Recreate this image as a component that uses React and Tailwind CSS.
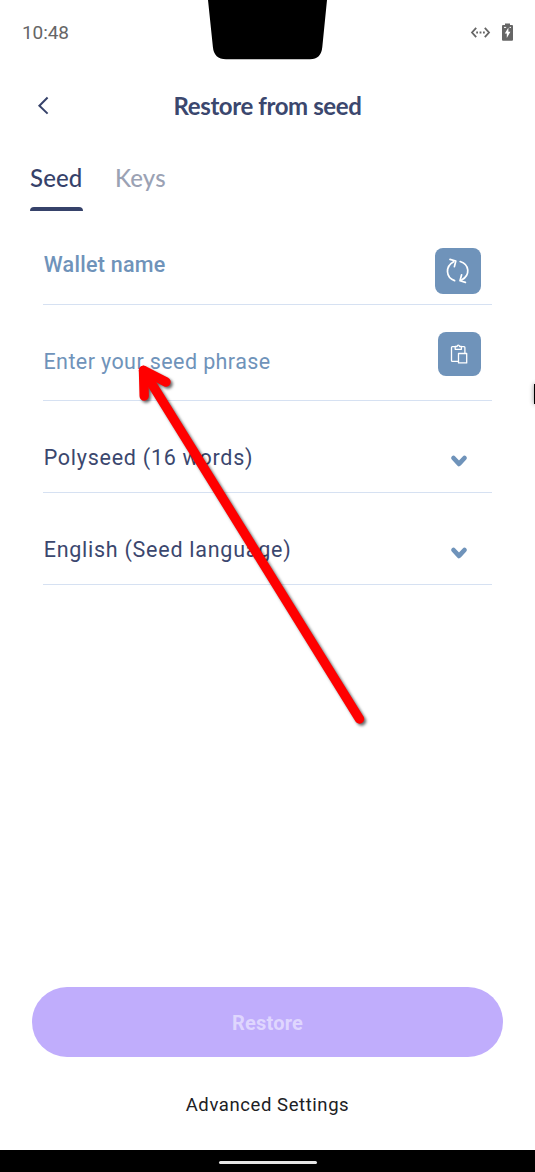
import React from "react";

function RefreshIcon() {
  return (
    <svg width="24" height="28" viewBox="0 0 24 28" fill="none" stroke="#fff" strokeWidth="1.7" strokeLinecap="round" strokeLinejoin="round">
      <path d="M8.6 23.6C-.4 20.5-1 9.5 7.6 4.7" />
      <path d="M4 2.4L9.8 4L8.4 9.6" />
      <path d="M14.2 4.5C23.5 7.5 24.6 18 15.6 23" />
      <path d="M15.6 17.8L14 23.8L19.4 25.4" />
    </svg>
  );
}

function PasteIcon() {
  return (
    <svg width="18" height="20" viewBox="0 0 18 20" fill="none" stroke="#fff" strokeWidth="1.3" strokeLinejoin="round">
      <path d="M5 2.6H2.4Q1.5 2.6 1.5 3.5V16.4Q1.5 17.3 2.4 17.3H8.3M11.5 2.6H14Q14.9 2.6 14.9 3.5V9.3" />
      <path d="M5.2 2.5H7.1Q7.2 1.1 8.3 1.1T9.5 2.5H11.4V5.3H5.2Z" />
      <path d="M8.5 9.5H16.7V18.9H8.5Z" />
    </svg>
  );
}

function Chevron() {
  return (
    <svg className="mr-[24px] mt-[29px]" width="18" height="14" viewBox="0 0 18 14" fill="none" stroke="#6f93ba" strokeWidth="4.7" strokeLinecap="round" strokeLinejoin="round">
      <path d="M3.5 4L9 9.9L14.5 4" />
    </svg>
  );
}

function StatusBar() {
  return (
    <div className="flex h-[66px] items-start justify-between">
      <div className="w-[208px] pl-[22px] pt-[20px] text-[19px] leading-[26px] tracking-[-0.1px] text-[#666]">10:48</div>
      <svg width="119" height="60" viewBox="0 0 119 60">
        <path d="M0 0H119L114.3 47Q113.2 59.3 102 59.3H18Q6 59.3 4.9 47Z" fill="#000" />
      </svg>
      <div className="flex w-[208px] items-center justify-end gap-[11px] pr-[21px] pt-[23px]">
        <svg width="21" height="14" viewBox="0 0 21 14" fill="none" stroke="#666" strokeWidth="1.8">
          <path d="M6.2 2.8L2 7.5L6.2 12.2M14.8 2.8L19 7.5L14.8 12.2" />
          <path d="M6.2 7.5H8M9.6 7.5H11.4M13 7.5H14.8" />
        </svg>
        <svg width="12" height="18" viewBox="0 0 12 18">
          <path d="M3 0.6H8V2H10Q11 2 11 3V16.7Q11 17.7 10 17.7H1Q0 17.7 0 16.7V3Q0 2 1 2H3Z" fill="#666" />
          <path d="M6.4 4.6V8.7H8.4L4.8 15V10.5H2.8Z" fill="#fff" />
          <path d="M2 4.4H4.2M7.6 4.4H9" stroke="#fff" strokeWidth="1" />
        </svg>
      </div>
    </div>
  );
}

function Field({ className, children }) {
  return <div className={`mx-[43px] flex items-center justify-between border-b border-[#d6e1f2] ${className}`}>{children}</div>;
}

export default function App() {
  return (
    <div className="relative flex h-[1172px] w-[535px] flex-col overflow-hidden bg-white font-['Roboto',sans-serif]">
      <StatusBar />
      <header className="grid h-[80px] grid-cols-[86px_1fr_86px] items-center text-[#36426a]">
        <svg className="ml-[36px]" width="14" height="20" viewBox="0 0 14 20" fill="none" stroke="currentColor" strokeWidth="2">
          <path d="M11.6 1.5L3.4 9.7L11.6 17.6" />
        </svg>
        <h1 className="text-center font-['Lato',sans-serif] text-[24px] font-bold tracking-[-0.4px] text-[#3b476e]">Restore from seed</h1>
      </header>
      <nav className="flex h-[65px] gap-[32px] pl-[30px] font-['Lato',sans-serif] text-[24px] leading-[30px] tracking-[0.15px]">
        <div className="flex w-[53px] flex-col justify-between pt-[17px] text-[#36426a]">
          <span className="font-medium">Seed</span>
          <div className="h-[4.5px] rounded-t-[4px] bg-[#36426a]" />
        </div>
        <div className="pt-[17px] font-medium text-[#9ba2b4]">Keys</div>
      </nav>
      <main className="flex-1 text-[21.5px] text-[#3b476e]">
        <Field className="h-[94px]">
          <span className="pl-[0.7px] pt-[15px] font-medium tracking-[0.27px] text-[#6f93ba]">Wallet name</span>
          <button className="mr-[11px] mt-[27px] flex h-[46px] w-[46px] items-center justify-center rounded-[8px] bg-[#6f93ba]">
            <RefreshIcon />
          </button>
        </Field>
        <Field className="h-[96px]">
          <span className="pl-[0.5px] pt-[19px] tracking-[0.4px] text-[#6f93ba]">Enter your seed phrase</span>
          <button className="mr-[11px] mt-[2px] flex h-[44px] w-[43.5px] items-center justify-center rounded-[8px] bg-[#6f93ba]">
            <PasteIcon />
          </button>
        </Field>
        <Field className="h-[92px]">
          <span className="pl-[0.7px] pt-[23px] tracking-[0.74px]">Polyseed (16 words)</span>
          <Chevron />
        </Field>
        <Field className="h-[92px]">
          <span className="pl-[0.7px] pt-[23px] tracking-[0.74px]">English (Seed language)</span>
          <Chevron />
        </Field>
      </main>
      <footer className="flex flex-col items-center">
        <button className="h-[70px] w-[471px] rounded-full bg-[#c0adfc] pt-[2px] text-[20px] font-bold tracking-[0.2px] text-[#dfd6fe]">Restore</button>
        <div className="h-[93px] pt-[33px] text-[18.5px] leading-[30px] tracking-[0.58px] text-[#202024]">Advanced Settings</div>
        <div className="flex h-[22px] w-full justify-center bg-black pt-[11px]">
          <div className="h-[2.5px] w-[98px] rounded-full bg-[#e6e6e6]" />
        </div>
      </footer>
      <div className="absolute left-[534px] top-[384px] h-[20px] w-[4px] bg-black shadow-[0_0_5px_#888]" />
      <svg className="pointer-events-none absolute left-0 top-0 drop-shadow-[2px_2px_1.5px_rgba(0,0,0,0.6)]" width="535" height="1172" viewBox="0 0 535 1172" fill="none" stroke="#f00" strokeWidth="9.4" strokeLinecap="round" strokeLinejoin="round">
        <path d="M359.5 719L143.5 370.5" />
        <path d="M144.2 396L143.5 370.3L166 382" />
      </svg>
    </div>
  );
}
